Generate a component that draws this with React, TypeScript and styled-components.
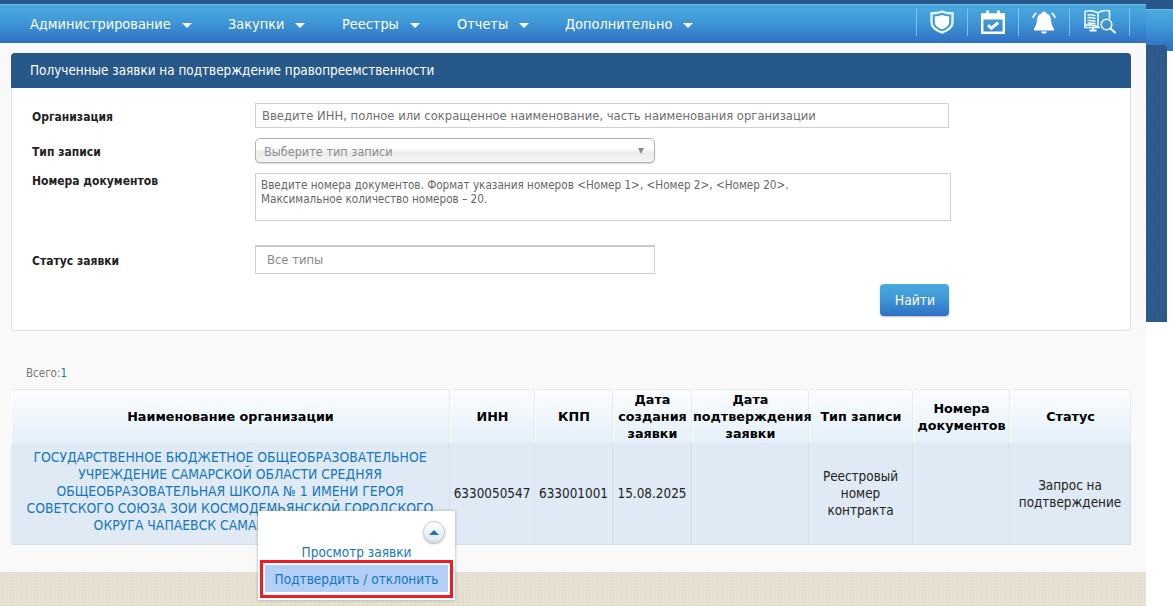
import React from "react";
import styled, { createGlobalStyle, css } from "styled-components";

const Global = createGlobalStyle`
  html, body { margin: 0; padding: 0; background: #fff; height: 100%; overflow: hidden; }
  body { font-family: "Noto Sans", "Liberation Sans", sans-serif; }
  * { box-sizing: border-box; }
`;

const tahoma = `"DejaVu Sans Condensed", "DejaVu Sans", "Noto Sans", sans-serif`;

const Page = styled.div`
  width: 1173px;
  height: 606px;
  display: grid;
  grid-template-columns: 1146px 27px;
  overflow: hidden;
  font-family: ${tahoma};
`;

const Main = styled.div`
  display: flex;
  flex-direction: column;
  height: 606px;
  position: relative;
`;

const TopStrip = styled.div`
  height: 4px;
  background: #27588a;
`;

const gradient = css`
  background: linear-gradient(#4aaade, #3f97d7 45%, #2f70c4);
`;

const Header = styled.header`
  height: 39px;
  ${gradient};
  border-top: 1px solid #6dbbe6;
  display: flex;
  align-items: center;
  justify-content: space-between;
  padding: 0 16px 0 30px;
`;

const Nav = styled.nav`
  display: flex;
  align-items: center;
  height: 100%;
`;

const NavItem = styled.a<{ $w: number }>`
  width: ${(p) => p.$w}px;
  display: flex;
  align-items: center;
  gap: 11px;
  font-size: 14.4px;
  color: #fff;
  white-space: nowrap;
`;

const Caret = styled.i`
  width: 0;
  height: 0;
  border-left: 5px solid transparent;
  border-right: 5px solid transparent;
  border-top: 5px solid #fff;
  margin-top: 2px;
`;

const IconBar = styled.div`
  display: flex;
  height: 28px;
  margin-top: -5px;
  border-left: 1px solid #85bee6;
`;

const IconCell = styled.div<{ $w?: number }>`
  width: ${(p) => p.$w ?? 51}px;
  height: 100%;
  display: flex;
  align-items: center;
  justify-content: center;
  border-right: 1px solid #85bee6;
  & > svg { display: block; }
`;

const Content = styled.main`
  flex: 1;
  background: #f9f9f9;
  padding: 10px 15px 0 11px;
  position: relative;
`;

const Card = styled.section`
  height: 278px;
  background: #fff;
  border: 1px solid #d6e4ec;
  border-top: none;
  border-radius: 4px;
  display: flex;
  flex-direction: column;
`;

const CardTitle = styled.h2`
  margin: 0 -1px;
  height: 35px;
  background: #27588a;
  border-radius: 4px 4px 0 0;
  color: #fff;
  font-size: 13.4px;
  font-weight: 400;
  line-height: 36px;
  padding-left: 19px;
`;

const CardBody = styled.form`
  flex: 1;
  padding: 15px 0 0 20px;
  display: flex;
  flex-direction: column;
`;

const Row = styled.div<{ $h: number; $mb: number; $top?: boolean }>`
  display: grid;
  grid-template-columns: 223px 1fr;
  height: ${(p) => p.$h}px;
  margin-bottom: ${(p) => p.$mb}px;
  align-items: ${(p) => (p.$top ? "start" : "center")};
`;

const Label = styled.label<{ $top?: boolean }>`
  font-size: 12px;
  font-weight: 700;
  color: #222;
  padding-top: ${(p) => (p.$top ? 1 : 2)}px;
`;

const Field = styled.div<{ $w: number; $h: number }>`
  width: ${(p) => p.$w}px;
  height: ${(p) => p.$h}px;
  border: 1px solid #c9d3da;
  background: #fff;
  color: #6f6f6f;
  font-size: 12.9px;
  display: flex;
  align-items: center;
  padding-left: 6px;
`;

const SelectField = styled(Field)`
  border: 1px solid #aeb2b6;
  border-radius: 5px;
  background: linear-gradient(#fff 0, #fff 40%, #ececec 60%, #f5f5f5 100%);
  color: #8d8d8d;
  font-size: 12.6px;
  padding: 1px 10px 0 8px;
  justify-content: space-between;
  box-shadow: 0 1px 1px rgba(0, 0, 0, 0.15);
`;

const SelectArrow = styled.i`
  width: 0;
  height: 0;
  border-left: 3.5px solid transparent;
  border-right: 3.5px solid transparent;
  border-top: 6px solid #8a8a8a;
`;

const AreaField = styled(Field)`
  align-items: flex-start;
  padding: 4px 0 0 5px;
  line-height: 14px;
  font-size: 11.63px;
  color: #666;
  white-space: pre-line;
`;

const StatusField = styled(Field)`
  border-top: 2px solid #c3ccd2;
  color: #8a8a8a;
  padding: 0 0 1px 11px;
`;

const ButtonRow = styled.div`
  display: flex;
  justify-content: flex-end;
  padding-right: 181px;
`;

const Button = styled.button`
  width: 69px;
  height: 32px;
  border: none;
  border-radius: 4px;
  ${gradient};
  box-shadow: 0 1px 2px rgba(0, 0, 0, 0.25);
  color: #fff;
  font-family: ${tahoma};
  font-size: 13.8px;
  font-weight: 400;
  padding: 0 0 0 1px;
`;

const Total = styled.div`
  margin: 35px 0 0 15px;
  height: 14px;
  line-height: 14px;
  font-size: 11.5px;
  color: #777;
  & b { color: #1577bd; font-weight: 400; }
`;

const Table = styled.table`
  margin-top: 9px;
  width: 1120px;
  table-layout: fixed;
  border-collapse: separate;
  border-spacing: 0;
`;

const Th = styled.th`
  height: 54px;
  padding: 0;
  background: linear-gradient(#fbfdff, #e4f0fa);
  border-top: 1px solid #e6eaed;
  border-right: 1px solid #e4e9ec;
  border-left: 1px solid #fff;
  border-radius: 4px 4px 0 0;
  font-family: "DejaVu Sans", sans-serif;
  font-size: 12.75px;
  line-height: 17px;
  font-weight: 700;
  color: #000;
  text-align: center;
`;

const Td = styled.td`
  height: 102px;
  padding: 0;
  background: #dfeaf4;
  border-right: 1px solid #d5dfe7;
  border-bottom: 1px solid #d3dfe8;
  text-align: center;
  font-size: 13.4px;
  line-height: 17px;
  color: #222;
`;

const OrgLink = styled.a`
  display: block;
  color: #1577bd;
  font-size: 13.84px;
  padding: 0 4px 4px;
`;

const Popup = styled.div`
  position: absolute;
  left: 258px;
  top: 468px;
  width: 197px;
  height: 89px;
  background: #fff;
  box-shadow: 0 0 3px rgba(0, 0, 0, 0.3);
  display: flex;
  flex-direction: column;
  align-items: center;
`;

const RoundBtn = styled.span`
  align-self: flex-end;
  flex-shrink: 0;
  margin: 10px 10px 0 0;
  width: 22px;
  height: 22px;
  border-radius: 50%;
  border: 1px solid #c4cdd4;
  background: linear-gradient(#fff, #dde6ee);
  box-shadow: 0 1px 2px rgba(0, 0, 0, 0.3);
  display: flex;
  align-items: center;
  justify-content: center;
  &::before {
    content: "";
    width: 0;
    height: 0;
    border-left: 5px solid transparent;
    border-right: 5px solid transparent;
    border-bottom: 5px solid #1577bd;
  }
`;

const PopupLink = styled.a`
  margin-top: 1px;
  height: 16px;
  line-height: 17px;
  font-size: 13.5px;
  color: #1577bd;
`;

const PopupActive = styled.a`
  flex-shrink: 0;
  width: 193px;
  height: 38px;
  border: 3px solid #ee1c25;
  padding: 2px;
  font-size: 13.5px;
  color: #1577bd;
  & > span {
    display: block;
    height: 27px;
    line-height: 28px;
    text-align: center;
    background: #b3cff5;
  }
`;

const Footer = styled.footer`
  height: 34px;
  background-color: #e4dfd1;
  background-image: repeating-conic-gradient(#e0dbcb 0 25%, #e9e5d9 0 50%);
  background-size: 3px 3px;
`;

const Side = styled.aside`
  display: flex;
  flex-direction: column;
`;

const SideTop = styled.div`
  height: 9px;
  background: #27588a;
`;

const SideBar = styled.div`
  height: 42px;
  ${gradient};
  border-top: 1px solid #6dbbe6;
  border-bottom: 2px solid #2b78cc;
`;

const SidePanel = styled.div`
  margin-top: -6px;
  position: relative;
  width: 21px;
  height: 277px;
  border-radius: 0 3px 0 0;
  background-color: #2c5a8c;
  background-image: repeating-conic-gradient(#2a5787 0 25%, #305f92 0 50%);
  background-size: 3px 3px;
`;

const Shield = () => (
  <svg width="24" height="24" viewBox="0 0 24 24">
    <path d="M12 1.500C8.500 3 5 3.500 1.500 3.200V12c0 5 4.500 8.500 10.500 10.500C18 20.500 22.500 17 22.500 12V3.200C19 3.500 15.500 3 12 1.500Z" fill="none" stroke="#e4f3fc" strokeWidth="2.400" />
    <path d="M4.800 6.400c2.700 0 4.800-.5 7.200-1.400 2.400.9 4.500 1.400 7.200 1.400V12c0 3.400-3 6-7.200 7.400C7.800 18 4.800 15.400 4.800 12Z" fill="#fff" />
  </svg>
);

const Calendar = () => (
  <svg width="24" height="24" viewBox="0 0 24 24">
    <path d="M1.200 4.500h21.600V22.800H1.200Z" fill="none" stroke="#fff" strokeWidth="2.400" />
    <path d="M1 5h22v4.500H1Z" fill="#fff" />
    <path d="M5.200 .5h2.800v4.500H5.200ZM16 .5h2.800v4.500H16Z" fill="#fff" />
    <path d="M7 15.200l3.400 3 6.800-5.600" fill="none" stroke="#fff" strokeWidth="3" />
  </svg>
);

const Bell = () => (
  <svg width="24" height="24" viewBox="0 0 24 24">
    <path d="M12 1.500c1.200 0 2 .7 2.100 1.800 3.400.9 4.800 3.600 5 7.200.2 3.500 1.100 6 2.900 8v2H2v-2c1.800-2 2.700-4.500 2.900-8 .2-3.600 1.600-6.300 5-7.200.1-1.100.9-1.800 2.100-1.800Z" fill="#fff" />
    <path d="M9 21.500h6c-.3 1.300-1.500 2.200-3 2.200s-2.700-.9-3-2.200Z" fill="#fff" />
    <path d="M.8 8c.6-2 1.800-3.700 3.500-5M23.200 8c-.6-2-1.800-3.700-3.500-5" fill="none" stroke="#f0f8fd" strokeWidth="1.700" />
  </svg>
);

const BookSearch = () => (
  <svg width="32" height="25" viewBox="0 0 32 25" fill="none" stroke="#f0f9fe">
    <path d="M1 2.500c4-1.300 8-1 13 1.300v13.700c-5-1.800-9-2-13-1.300Z" strokeWidth="1.600" />
    <path d="M14 3.800c4-2.300 8-2.800 11.500-1.800v8" strokeWidth="1.600" />
    <path d="M3.500 6c3-.5 5.500-.2 8 .9M3.500 8.800c3-.5 5.500-.2 8 .9M3.500 11.600c3-.5 5.500-.2 8 .9M3.500 14.200c3-.4 5.500-.1 8 .8" strokeWidth="1.500" />
    <path d="M1 16.200v2.300h15" strokeWidth="1.600" />
    <path d="M9 18.500v2.500M5.500 21.500h7" strokeWidth="2" />
    <circle cx="22.500" cy="15.500" r="5.300" strokeWidth="1.600" />
    <path d="M26.500 19.500l5 4.500" strokeWidth="2" />
  </svg>
);

const navItems: [string, number][] = [
  ["Администрирование", 198],
  ["Закупки", 114],
  ["Реестры", 115],
  ["Отчеты", 108],
  ["Дополнительно", 140],
];

const columns: [string, number][] = [
  ["Наименование организации", 439],
  ["ИНН", 85],
  ["КПП", 78],
  ["Дата создания заявки", 79],
  ["Дата подтверждения заявки", 117],
  ["Тип записи", 104],
  ["Номера документов", 97],
  ["Статус", 121],
];

export default function App() {
  return (
    <Page>
      <Global />
      <Main>
        <TopStrip />
        <Header>
          <Nav>
            {navItems.map(([t, w]) => (
              <NavItem key={t} $w={w}>
                {t}
                <Caret />
              </NavItem>
            ))}
          </Nav>
          <IconBar>
            <IconCell><Shield /></IconCell>
            <IconCell><Calendar /></IconCell>
            <IconCell><Bell /></IconCell>
            <IconCell $w={60}><BookSearch /></IconCell>
          </IconBar>
        </Header>
        <Content>
          <Card>
            <CardTitle>Полученные заявки на подтверждение правопреемственности</CardTitle>
            <CardBody>
              <Row $h={25} $mb={10}>
                <Label>Организация</Label>
                <Field $w={694} $h={25}>Введите ИНН, полное или сокращенное наименование, часть наименования организации</Field>
              </Row>
              <Row $h={25} $mb={10}>
                <Label>Тип записи</Label>
                <SelectField $w={400} $h={25}>
                  Выберите тип записи
                  <SelectArrow />
                </SelectField>
              </Row>
              <Row $h={48} $mb={24} $top>
                <Label $top>Номера документов</Label>
                <AreaField $w={696} $h={48}>
                  {"Введите номера документов. Формат указания номеров <Номер 1>, <Номер 2>, <Номер 20>.\nМаксимальное количество номеров – 20."}
                </AreaField>
              </Row>
              <Row $h={29} $mb={10}>
                <Label>Статус заявки</Label>
                <StatusField $w={400} $h={29}>Все типы</StatusField>
              </Row>
              <ButtonRow>
                <Button type="button">Найти</Button>
              </ButtonRow>
            </CardBody>
          </Card>
          <Total>Всего:<b>1</b></Total>
          <Table>
            <colgroup>
              {columns.map(([t, w]) => (
                <col key={t} width={w} />
              ))}
            </colgroup>
            <thead>
              <tr>
                {columns.map(([t]) => (
                  <Th key={t}>{t}</Th>
                ))}
              </tr>
            </thead>
            <tbody>
              <tr>
                <Td>
                  <OrgLink>ГОСУДАРСТВЕННОЕ БЮДЖЕТНОЕ ОБЩЕОБРАЗОВАТЕЛЬНОЕ УЧРЕЖДЕНИЕ САМАРСКОЙ ОБЛАСТИ СРЕДНЯЯ ОБЩЕОБРАЗОВАТЕЛЬНАЯ ШКОЛА № 1 ИМЕНИ ГЕРОЯ СОВЕТСКОГО СОЮЗА ЗОИ КОСМОДЕМЬЯНСКОЙ ГОРОДСКОГО ОКРУГА ЧАПАЕВСК САМАРСКОЙ ОБЛАСТИ</OrgLink>
                </Td>
                <Td>6330050547</Td>
                <Td>633001001</Td>
                <Td>15.08.2025</Td>
                <Td></Td>
                <Td>Реестровый номер контракта</Td>
                <Td></Td>
                <Td>Запрос на подтверждение</Td>
              </tr>
            </tbody>
          </Table>
          <Popup>
            <RoundBtn />
            <PopupLink>Просмотр заявки</PopupLink>
            <PopupActive><span>Подтвердить / отклонить</span></PopupActive>
          </Popup>
        </Content>
        <Footer />
      </Main>
      <Side>
        <SideTop />
        <SideBar />
        <SidePanel />
      </Side>
    </Page>
  );
}
